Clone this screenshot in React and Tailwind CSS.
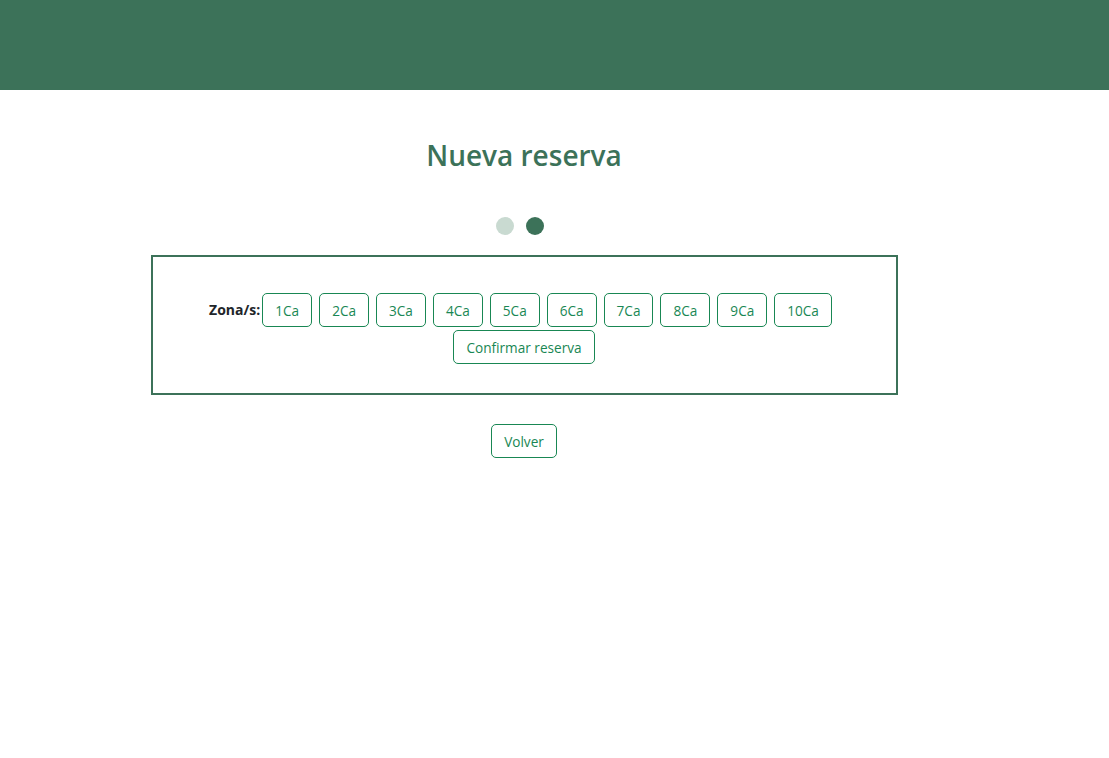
import React from "react";

const zones = ["1Ca", "2Ca", "3Ca", "4Ca", "5Ca", "6Ca", "7Ca", "8Ca", "9Ca", "10Ca"];

const btn =
  "inline-flex items-center justify-center h-[34px] px-3 pt-[2px] rounded-[5px] border border-[#198754] text-[#198754] bg-white text-[13.6px] leading-none align-top";

export default function App() {
  return (
    <div className="min-h-[758px] bg-white" style={{ fontFamily: '"Open Sans", "Noto Sans", sans-serif' }}>
      <header className="h-[90px] bg-[#3c7259]" />
      <main className="w-[1048px] flex flex-col items-center">
        <h1 className="mt-[45px] h-[40px] text-[28px] font-semibold text-[#3c7259] leading-[40px]">Nueva reserva</h1>
        <div className="mt-[42px] mr-[8px] flex gap-[12px]">
          <span className="w-[18px] h-[18px] rounded-full bg-[#c9dad1]" />
          <span className="w-[18px] h-[18px] rounded-full bg-[#3c7259]" />
        </div>
        <section className="mt-[20px] w-[747px] h-[140px] border-2 border-[#3c7259] pt-[36px] text-center">
          <div className="text-center">
            <span className="inline-block align-top mt-[6px] mr-[2px] text-[14px] font-bold text-[#212529]">Zona/s:</span>
            {zones.map((z) => (
              <span key={z} className={btn + " mr-[7px]"}>{z}</span>
            ))}
          </div>
          <div className="mt-[3px] flex justify-center">
            <span className={btn}>Confirmar reserva</span>
          </div>
        </section>
        <div className="mt-[29px]">
          <span className={btn}>Volver</span>
        </div>
      </main>
    </div>
  );
}
